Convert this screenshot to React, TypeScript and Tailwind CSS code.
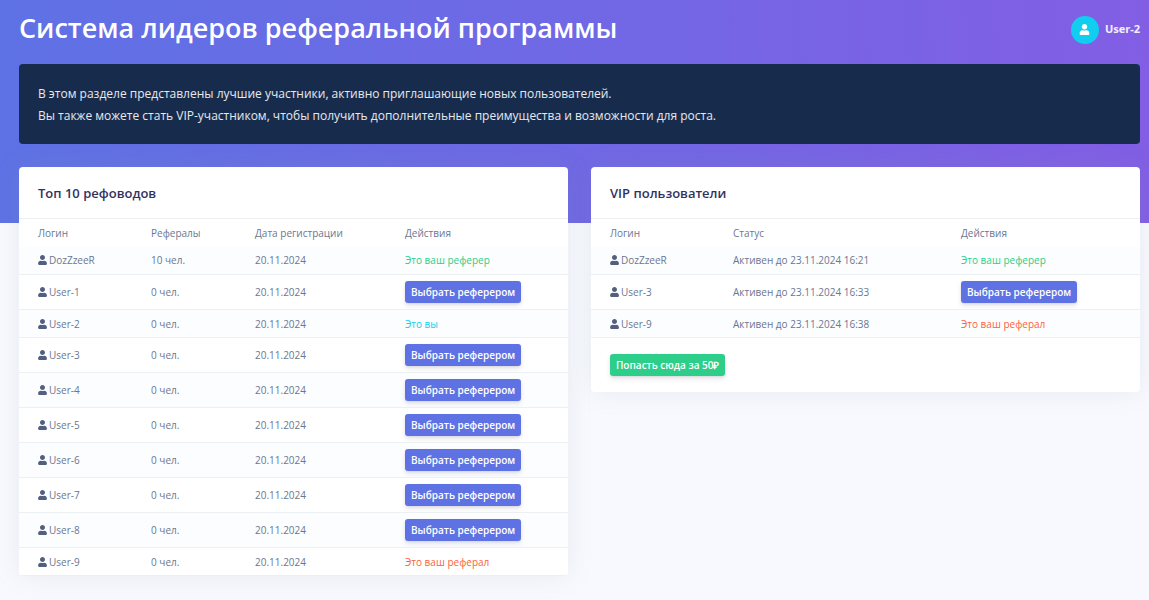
import React from 'react';
import { FaUser } from 'react-icons/fa';

type Relation = 'referrer' | 'self' | 'referral' | 'none';

interface Leader {
  login: string;
  referrals: number;
  registered: string;
  relation: Relation;
}

interface VipUser {
  login: string;
  activeUntil: string;
  relation: Relation;
}

const leaders: Leader[] = [
  { login: 'DozZzeeR', referrals: 10, registered: '20.11.2024', relation: 'referrer' },
  { login: 'User-1', referrals: 0, registered: '20.11.2024', relation: 'none' },
  { login: 'User-2', referrals: 0, registered: '20.11.2024', relation: 'self' },
  { login: 'User-3', referrals: 0, registered: '20.11.2024', relation: 'none' },
  { login: 'User-4', referrals: 0, registered: '20.11.2024', relation: 'none' },
  { login: 'User-5', referrals: 0, registered: '20.11.2024', relation: 'none' },
  { login: 'User-6', referrals: 0, registered: '20.11.2024', relation: 'none' },
  { login: 'User-7', referrals: 0, registered: '20.11.2024', relation: 'none' },
  { login: 'User-8', referrals: 0, registered: '20.11.2024', relation: 'none' },
  { login: 'User-9', referrals: 0, registered: '20.11.2024', relation: 'referral' },
];

const vipUsers: VipUser[] = [
  { login: 'DozZzeeR', activeUntil: '23.11.2024 16:21', relation: 'referrer' },
  { login: 'User-3', activeUntil: '23.11.2024 16:33', relation: 'none' },
  { login: 'User-9', activeUntil: '23.11.2024 16:38', relation: 'referral' },
];

const buttonClass =
  'block h-[22px] rounded-[3px] px-1.5 text-[10px] leading-5 font-semibold text-white shadow-[0_3px_5px_rgba(50,50,93,0.11),0_1px_2px_rgba(0,0,0,0.08)]';

const Action: React.FC<{ relation: Relation }> = ({ relation }) => {
  if (relation === 'referrer') return <span className="text-[#2dce89]">Это ваш реферер</span>;
  if (relation === 'self') return <span className="text-[#11cdef]">Это вы</span>;
  if (relation === 'referral') return <span className="text-[#fb6340]">Это ваш реферал</span>;
  return (
    <button type="button" className={`${buttonClass} bg-[#5e72e4]`}>
      Выбрать реферером
    </button>
  );
};

const Login: React.FC<{ name: string }> = ({ name }) => (
  <span className="flex items-center gap-[2px]">
    <FaUser className="h-[10px] w-[9px] text-[#525f7f]" />
    {name}
  </span>
);

const Card: React.FC<{ title: string; children: React.ReactNode }> = ({ title, children }) => (
  <section className="overflow-hidden rounded bg-white shadow-[0_0_25px_rgba(136,152,170,0.15)]">
    <h2 className="px-[19px] pt-[17px] pb-[15px] text-[13px] leading-[19px] font-semibold text-[#32325d]">{title}</h2>
    {children}
  </section>
);

interface Column {
  label: string;
  width: string;
}

const Table: React.FC<{ columns: Column[]; rows: { relation: Relation; cells: React.ReactNode[] }[] }> = ({
  columns,
  rows,
}) => (
  <table className="w-full table-fixed border-t border-[#edf0f3] text-left text-[10px] leading-4 whitespace-nowrap text-[#6b7690]">
    <thead>
      <tr className="h-7">
        {columns.map((column) => (
          <th key={column.label} scope="col" className={`pl-[19px] font-normal ${column.width}`}>
            {column.label}
          </th>
        ))}
      </tr>
    </thead>
    <tbody>
      {rows.map((row, index) => (
        <tr
          key={index}
          className={`border-b border-[#edf0f3] odd:bg-[#fbfdff] ${row.relation === 'none' ? 'h-[35px]' : 'h-7'}`}
        >
          {row.cells.map((cell, i) => (
            <td key={i} className="pl-[19px]">
              {cell}
            </td>
          ))}
          <td className="pl-[19px]">
            <Action relation={row.relation} />
          </td>
        </tr>
      ))}
    </tbody>
  </table>
);

const App: React.FC = () => {
  return (
    <div className="min-h-screen bg-[#f8f9fe] bg-[linear-gradient(87deg,#5e72e4,#825ee4)] bg-[length:100%_223px] bg-no-repeat pr-[9px] pb-6 pl-[19px] font-['Open_Sans',sans-serif]">
      {/* Header */}
      <header className="flex h-16 items-center justify-between pb-[5px]">
        <h1 className="pb-[3px] text-[27px] leading-9 font-semibold text-white">
          Система лидеров реферальной программы
        </h1>
        <a href="#profile" className="flex items-center gap-1.5 text-[11px] font-bold text-white/90">
          <span className="flex size-7 items-center justify-center rounded-full bg-[#11cdef] text-white">
            <FaUser className="size-[11px]" />
          </span>
          User-2
        </a>
      </header>

      {/* Intro */}
      <div className="rounded bg-[#172b4d] px-[19px] pt-[19px] pb-[17px] text-[12px] leading-[22px] text-white/90">
        <p>В этом разделе представлены лучшие участники, активно приглашающие новых пользователей.</p>
        <p>Вы также можете стать VIP-участником, чтобы получить дополнительные преимущества и возможности для роста.</p>
      </div>

      {/* Tables */}
      <main className="mt-[23px] grid grid-cols-2 items-start gap-[23px]">
        <Card title="Топ 10 рефоводов">
          <Table
            columns={[
              { label: 'Логин', width: 'w-[113px]' },
              { label: 'Рефералы', width: 'w-[104px]' },
              { label: 'Дата регистрации', width: 'w-[150px]' },
              { label: 'Действия', width: 'w-auto' },
            ]}
            rows={leaders.map((user) => ({
              relation: user.relation,
              cells: [<Login name={user.login} />, `${user.referrals} чел.`, user.registered],
            }))}
          />
        </Card>

        <Card title="VIP пользователи">
          <Table
            columns={[
              { label: 'Логин', width: 'w-[123px]' },
              { label: 'Статус', width: 'w-[228px]' },
              { label: 'Действия', width: 'w-auto' },
            ]}
            rows={vipUsers.map((user) => ({
              relation: user.relation,
              cells: [<Login name={user.login} />, `Активен до ${user.activeUntil}`],
            }))}
          />
          <div className="px-[19px] py-4">
            <button type="button" className={`${buttonClass} bg-[#2dce89]`}>
              Попасть сюда за 50₽
            </button>
          </div>
        </Card>
      </main>
    </div>
  );
};

export default App;
